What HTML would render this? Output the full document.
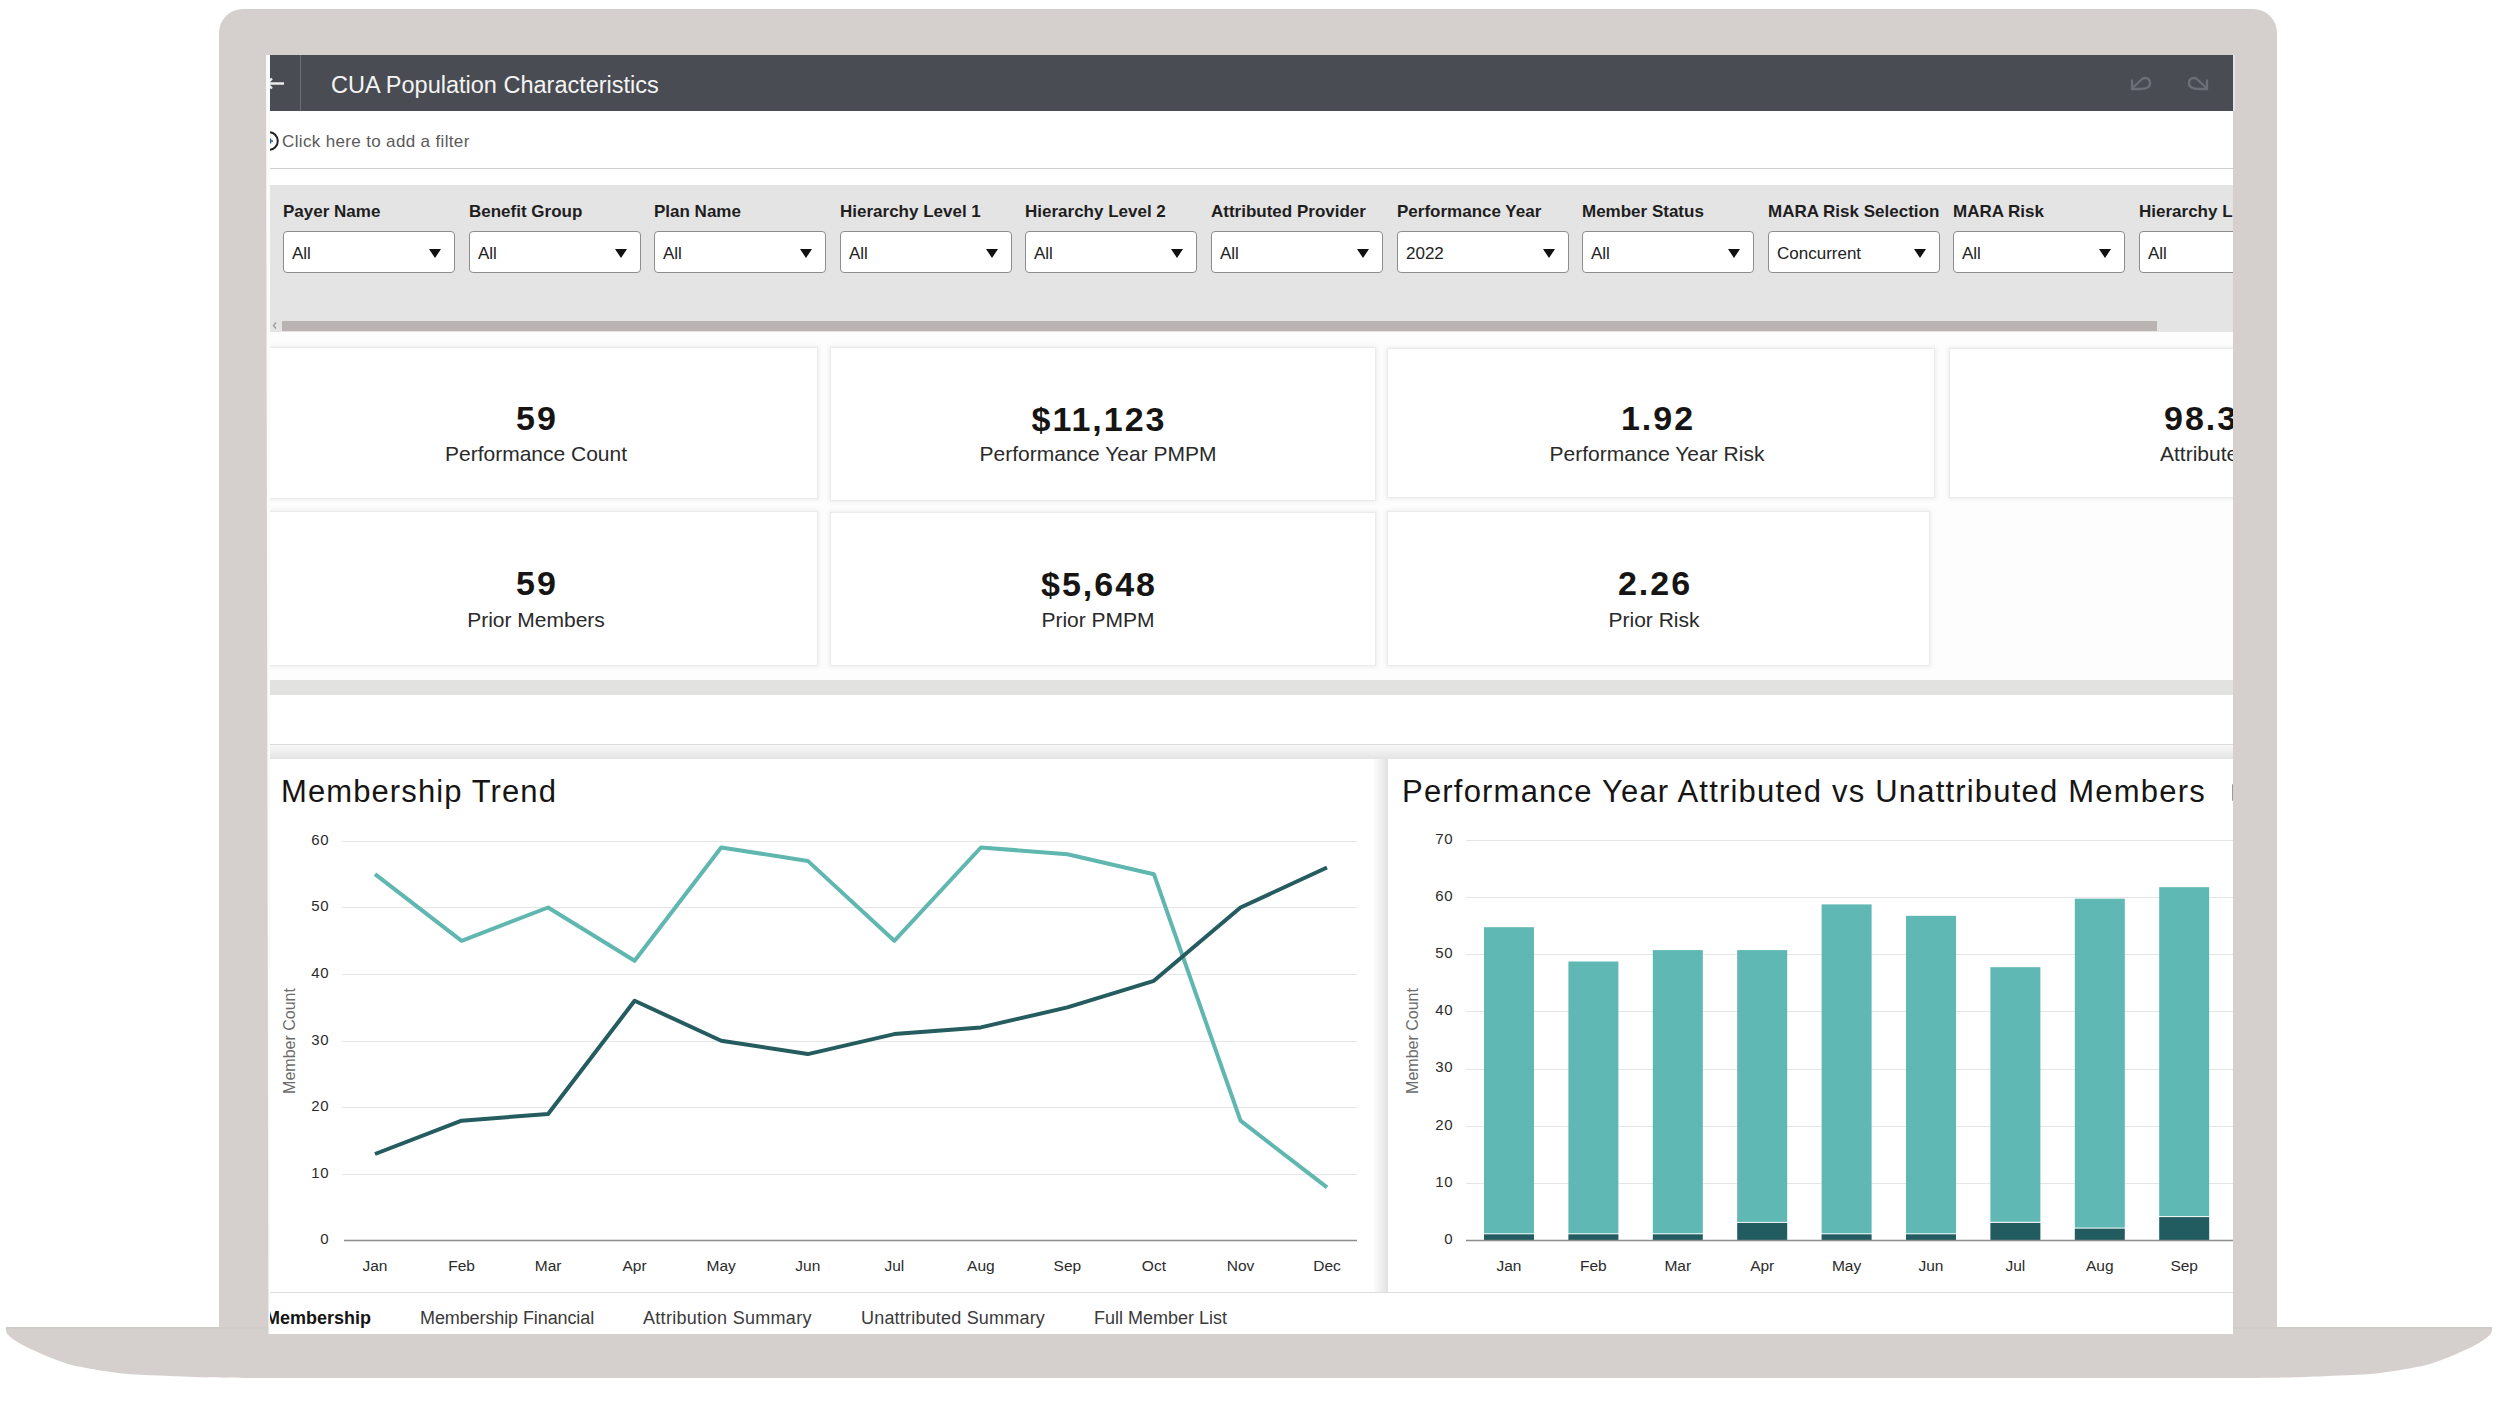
<!DOCTYPE html>
<html>
<head>
<meta charset="utf-8">
<style>
html,body{margin:0;padding:0;}
body{width:2500px;height:1424px;position:relative;overflow:hidden;background:#fff;font-family:"Liberation Sans",sans-serif;color:#161513;}
.a{position:absolute;}
.t{position:absolute;white-space:nowrap;line-height:1;}
#bezel{left:219px;top:9px;width:2058px;height:1340px;background:#d5d0cd;border-radius:24px 24px 0 0;}
#screen{left:270px;top:55px;width:1963px;height:1279px;background:#fff;overflow:hidden;}
#hdr{left:0;top:0;width:1963px;height:56px;background:#494c52;}
.lbl{font-weight:bold;font-size:17px;color:#1e1e1e;}
.dd{position:absolute;top:176px;width:170px;height:40px;border:1px solid #8d8d8d;border-radius:4px;background:#fff;}
.dd span{position:absolute;left:8px;top:13px;font-size:17px;line-height:1;color:#222;}
.dd i{position:absolute;left:145px;top:17px;width:0;height:0;border-left:6px solid transparent;border-right:6px solid transparent;border-top:9px solid #111;}
.card{position:absolute;background:#fff;}
.kv{position:absolute;left:0;width:100%;text-align:center;font-weight:bold;font-size:34px;line-height:1;color:#161513;letter-spacing:2px;text-indent:2px;}
.kl{position:absolute;left:0;width:100%;text-align:center;font-size:21px;line-height:1;color:#2a2a2a;}
.yl{font-size:15px;letter-spacing:0.5px;fill:#2b2b2b;font-family:"Liberation Sans",sans-serif;}
.xl{font-size:15.5px;fill:#2b2b2b;font-family:"Liberation Sans",sans-serif;}
.ax{font-size:16px;fill:#6b6b6b;font-family:"Liberation Sans",sans-serif;}
</style>
</head>
<body>
<!-- laptop body -->
<div id="bezel" class="a"></div>
<svg class="a" style="left:0;top:0" width="2500" height="1424">
  <path d="M5.5,1327.5 C5.9,1328.7 5.6,1332.1 8.0,1334.8 C10.4,1337.5 14.7,1340.5 20.0,1343.6 C25.3,1346.7 33.3,1350.3 40.0,1353.2 C46.7,1356.1 53.3,1358.9 60.0,1361.2 C66.7,1363.5 70.0,1364.8 80.0,1366.8 C90.0,1368.8 106.7,1371.7 120.0,1373.2 C133.3,1374.7 146.7,1374.9 160.0,1375.6 C173.3,1376.3 183.3,1376.8 200.0,1377.2 C216.7,1377.6 250.0,1377.9 260.0,1378.0 L2238,1378 C2248.0,1377.9 2281.3,1377.6 2298.0,1377.2 C2314.7,1376.8 2324.7,1376.3 2338.0,1375.6 C2351.3,1374.9 2364.7,1374.7 2378.0,1373.2 C2391.3,1371.7 2408.0,1368.8 2418.0,1366.8 C2428.0,1364.8 2431.3,1363.5 2438.0,1361.2 C2444.7,1358.9 2451.3,1356.1 2458.0,1353.2 C2464.7,1350.3 2472.7,1346.7 2478.0,1343.6 C2483.3,1340.5 2487.6,1337.5 2490.0,1334.8 C2492.4,1332.1 2492.1,1328.7 2492.5,1327.5 Z" fill="#d5d0cd"/>
  <rect x="6" y="1327" width="2486" height="2" fill="#cdccc6"/>
</svg>

<div class="a" style="left:266px;top:55px;width:5px;height:1279px;background:#fbfbfb;clip-path:polygon(0 0,100% 0,100% 100%,2.5px 100%)"></div>
<div class="a" style="left:2232px;top:55px;width:3px;height:56px;background:#e4e2e2"></div>
<div id="screen" class="a">
  <!-- header -->
  <div id="hdr" class="a">
    <div class="a" style="left:30px;top:0;width:1px;height:56px;background:#6c6f75"></div>
    <svg class="a" style="left:0;top:0" width="1963" height="56" viewBox="270 55 1963 56">
      <path d="M284,83.5 L269,83.5 M272,78.5 L267,83.5 L272,88.5" stroke="#ececec" stroke-width="2.4" fill="none"/>
      <path d="M2132.5,88 L2141.5,79.5 C2144,77 2149.5,77.5 2150,82.5 C2150.5,87 2146,89 2140,88.8 M2132,79.5 L2132,89 L2141,89" stroke="#6c6f77" stroke-width="2.3" fill="none"/>
      <path d="M2206.5,88 L2197.5,79.5 C2195,77 2189.5,77.5 2189,82.5 C2188.5,87 2193,89 2199,88.8 M2207,79.5 L2207,89 L2198,89" stroke="#6c6f77" stroke-width="2.3" fill="none"/>
    </svg>
    <div class="t" style="left:61px;top:19px;font-size:23.5px;color:#f4f4f4">CUA Population Characteristics</div>
  </div>

  <!-- filter row -->
  <svg class="a" style="left:0;top:70px" width="20" height="30" viewBox="270 125 20 30"><circle cx="269" cy="141" r="8.8" stroke="#222" stroke-width="2" fill="none"/><path d="M268,141 L273,141 M270.5,138.5 L270.5,143.5" stroke="#2a5a8a" stroke-width="1.5"/></svg>
  <div class="t" style="left:12px;top:78px;font-size:17px;color:#5a5a5a;letter-spacing:0.35px">Click here to add a filter</div>
  <div class="a" style="left:0;top:113px;width:1963px;height:1px;background:#cfcfcf"></div>

  <!-- filter bar -->
  <div class="a" id="fbar" style="left:0;top:130px;width:1963px;height:147px;background:#e4e4e4">
  </div>
  <div class="t lbl" style="left:13px;top:148px">Payer Name</div>
  <div class="dd" style="left:13px"><span>All</span><i></i></div>
  <div class="t lbl" style="left:199px;top:148px">Benefit Group</div>
  <div class="dd" style="left:199px"><span>All</span><i></i></div>
  <div class="t lbl" style="left:384px;top:148px">Plan Name</div>
  <div class="dd" style="left:384px"><span>All</span><i></i></div>
  <div class="t lbl" style="left:570px;top:148px">Hierarchy Level 1</div>
  <div class="dd" style="left:570px"><span>All</span><i></i></div>
  <div class="t lbl" style="left:755px;top:148px">Hierarchy Level 2</div>
  <div class="dd" style="left:755px"><span>All</span><i></i></div>
  <div class="t lbl" style="left:941px;top:148px">Attributed Provider</div>
  <div class="dd" style="left:941px"><span>All</span><i></i></div>
  <div class="t lbl" style="left:1127px;top:148px">Performance Year</div>
  <div class="dd" style="left:1127px"><span>2022</span><i></i></div>
  <div class="t lbl" style="left:1312px;top:148px">Member Status</div>
  <div class="dd" style="left:1312px"><span>All</span><i></i></div>
  <div class="t lbl" style="left:1498px;top:148px">MARA Risk Selection</div>
  <div class="dd" style="left:1498px"><span>Concurrent</span><i></i></div>
  <div class="t lbl" style="left:1683px;top:148px">MARA Risk</div>
  <div class="dd" style="left:1683px"><span>All</span><i></i></div>
  <div class="t lbl" style="left:1869px;top:148px">Hierarchy Level 3</div>
  <div class="dd" style="left:1869px"><span>All</span><i></i></div>
  <!-- scrollbar -->
  <div class="a" style="left:12px;top:266px;width:1875px;height:10px;background:#b9b4b2"></div>
  <svg class="a" style="left:0;top:262px" width="12" height="20" viewBox="270 317 12 20"><path d="M276,322.5 L273.5,325.5 L276,328.5" stroke="#9a9a9a" stroke-width="1.3" fill="none"/></svg>

  <!-- KPI area -->
  <div class="a" style="left:0;top:277px;width:1963px;height:348px;background:#fdfdfd"></div>
  
  <div class="card" style="left:0;top:293px;width:547px;height:150px;box-shadow:0 0 1px 1px #ebebeb, 0 0 5px 2px #efefef"></div>
  <div class="card" style="left:561px;top:293px;width:544px;height:152px;box-shadow:0 0 1px 1px #ebebeb, 0 0 5px 2px #efefef"></div>
  <div class="card" style="left:1118px;top:294px;width:546px;height:148px;box-shadow:0 0 1px 1px #ebebeb, 0 0 5px 2px #efefef"></div>
  <div class="card" style="left:1680px;top:294px;width:400px;height:148px;box-shadow:0 0 1px 1px #ebebeb, 0 0 5px 2px #efefef"></div>
  <div class="card" style="left:0;top:457px;width:547px;height:153px;box-shadow:0 0 1px 1px #ebebeb, 0 0 5px 2px #efefef"></div>
  <div class="card" style="left:561px;top:458px;width:544px;height:152px;box-shadow:0 0 1px 1px #ebebeb, 0 0 5px 2px #efefef"></div>
  <div class="card" style="left:1118px;top:457px;width:541px;height:153px;box-shadow:0 0 1px 1px #ebebeb, 0 0 5px 2px #efefef"></div>
  

  <div class="t kv" style="left:166px;width:200px;top:346px">59</div>
  <div class="t kl" style="left:116px;width:300px;top:388px">Performance Count</div>
  <div class="t kv" style="left:728px;width:200px;top:347px">$11,123</div>
  <div class="t kl" style="left:678px;width:300px;top:388px">Performance Year PMPM</div>
  <div class="t kv" style="left:1287px;width:200px;top:346px">1.92</div>
  <div class="t kl" style="left:1237px;width:300px;top:388px">Performance Year Risk</div>
  <div class="t kv" style="left:1894px;width:200px;top:346px;text-align:left;text-indent:0">98.31%</div>
  <div class="t kl" style="left:1890px;width:300px;top:388px;text-align:left">Attributed %</div>
  <div class="t kv" style="left:166px;width:200px;top:511px">59</div>
  <div class="t kl" style="left:116px;width:300px;top:554px">Prior Members</div>
  <div class="t kv" style="left:728px;width:200px;top:512px">$5,648</div>
  <div class="t kl" style="left:678px;width:300px;top:554px">Prior PMPM</div>
  <div class="t kv" style="left:1284px;width:200px;top:511px">2.26</div>
  <div class="t kl" style="left:1234px;width:300px;top:554px">Prior Risk</div>

  <div class="a" style="left:0;top:625px;width:1963px;height:15px;background:#e2e2e0"></div>
  <div class="a" style="left:0;top:640px;width:1963px;height:49px;background:#fff"></div>
  <div class="a" style="left:0;top:689px;width:1963px;height:1px;background:#dcdcdc"></div>
  <div class="a" style="left:0;top:690px;width:1963px;height:14px;background:linear-gradient(#f8f8f8,#e4e4e4)"></div>
  <!-- charts -->
  <div class="a" style="left:1104px;top:704px;width:14px;height:533px;background:linear-gradient(90deg,#fbfbfb,#e2e2e2)"></div>
  <svg class="a" style="left:0;top:0" width="1963" height="1279" viewBox="270 55 1963 1279">
<rect x="270" y="759" width="1104" height="533" fill="#fff"/>
<rect x="1388" y="759" width="845" height="533" fill="#fff"/>
<line x1="342" y1="1174.5" x2="1357" y2="1174.5" stroke="#e5e5e5" stroke-width="1"/>
<line x1="342" y1="1107.5" x2="1357" y2="1107.5" stroke="#e5e5e5" stroke-width="1"/>
<line x1="342" y1="1041.5" x2="1357" y2="1041.5" stroke="#e5e5e5" stroke-width="1"/>
<line x1="342" y1="974.5" x2="1357" y2="974.5" stroke="#e5e5e5" stroke-width="1"/>
<line x1="342" y1="907.5" x2="1357" y2="907.5" stroke="#e5e5e5" stroke-width="1"/>
<line x1="342" y1="841.5" x2="1357" y2="841.5" stroke="#e5e5e5" stroke-width="1"/>
<line x1="344" y1="1240.5" x2="1357" y2="1240.5" stroke="#8c8c8c" stroke-width="1.5"/>
<text x="329" y="1244.4" text-anchor="end" class="yl">0</text>
<text x="329" y="1177.8" text-anchor="end" class="yl">10</text>
<text x="329" y="1111.2" text-anchor="end" class="yl">20</text>
<text x="329" y="1044.5" text-anchor="end" class="yl">30</text>
<text x="329" y="977.9" text-anchor="end" class="yl">40</text>
<text x="329" y="911.3" text-anchor="end" class="yl">50</text>
<text x="329" y="844.7" text-anchor="end" class="yl">60</text>
<text x="375.0" y="1270.5" text-anchor="middle" class="xl">Jan</text>
<text x="461.6" y="1270.5" text-anchor="middle" class="xl">Feb</text>
<text x="548.1" y="1270.5" text-anchor="middle" class="xl">Mar</text>
<text x="634.6" y="1270.5" text-anchor="middle" class="xl">Apr</text>
<text x="721.2" y="1270.5" text-anchor="middle" class="xl">May</text>
<text x="807.8" y="1270.5" text-anchor="middle" class="xl">Jun</text>
<text x="894.3" y="1270.5" text-anchor="middle" class="xl">Jul</text>
<text x="980.9" y="1270.5" text-anchor="middle" class="xl">Aug</text>
<text x="1067.4" y="1270.5" text-anchor="middle" class="xl">Sep</text>
<text x="1153.9" y="1270.5" text-anchor="middle" class="xl">Oct</text>
<text x="1240.5" y="1270.5" text-anchor="middle" class="xl">Nov</text>
<text x="1327.0" y="1270.5" text-anchor="middle" class="xl">Dec</text>
<text transform="translate(294.5,1041) rotate(-90)" text-anchor="middle" class="ax">Member Count</text>
<polyline points="375.0,874.2 461.6,940.8 548.1,907.5 634.6,960.8 721.2,847.5 807.8,860.9 894.3,940.8 980.9,847.5 1067.4,854.2 1153.9,874.2 1240.5,1120.7 1327.0,1187.3" fill="none" stroke="#5fb7b0" stroke-width="4" stroke-linejoin="round"/>
<polyline points="375.0,1154.0 461.6,1120.7 548.1,1114.0 634.6,1000.8 721.2,1040.7 807.8,1054.1 894.3,1034.1 980.9,1027.4 1067.4,1007.4 1153.9,980.8 1240.5,907.5 1327.0,867.5" fill="none" stroke="#245c5f" stroke-width="4" stroke-linejoin="round"/>
<line x1="1466" y1="1183.5" x2="2233" y2="1183.5" stroke="#e5e5e5" stroke-width="1"/>
<line x1="1466" y1="1126.5" x2="2233" y2="1126.5" stroke="#e5e5e5" stroke-width="1"/>
<line x1="1466" y1="1069.5" x2="2233" y2="1069.5" stroke="#e5e5e5" stroke-width="1"/>
<line x1="1466" y1="1011.5" x2="2233" y2="1011.5" stroke="#e5e5e5" stroke-width="1"/>
<line x1="1466" y1="954.5" x2="2233" y2="954.5" stroke="#e5e5e5" stroke-width="1"/>
<line x1="1466" y1="897.5" x2="2233" y2="897.5" stroke="#e5e5e5" stroke-width="1"/>
<line x1="1466" y1="840.5" x2="2233" y2="840.5" stroke="#e5e5e5" stroke-width="1"/>
<text x="1453" y="1243.8" text-anchor="end" class="yl">0</text>
<text x="1453" y="1186.7" text-anchor="end" class="yl">10</text>
<text x="1453" y="1129.5" text-anchor="end" class="yl">20</text>
<text x="1453" y="1072.4" text-anchor="end" class="yl">30</text>
<text x="1453" y="1015.2" text-anchor="end" class="yl">40</text>
<text x="1453" y="958.1" text-anchor="end" class="yl">50</text>
<text x="1453" y="901.0" text-anchor="end" class="yl">60</text>
<text x="1453" y="843.8" text-anchor="end" class="yl">70</text>
<rect x="1484.0" y="927.2" width="50" height="306.1" fill="#5fb8b3"/>
<rect x="1484.0" y="1234.3" width="50" height="5.7" fill="#235c60"/>
<text x="1509.0" y="1270.5" text-anchor="middle" class="xl">Jan</text>
<rect x="1568.4" y="961.5" width="50" height="271.8" fill="#5fb8b3"/>
<rect x="1568.4" y="1234.3" width="50" height="5.7" fill="#235c60"/>
<text x="1593.4" y="1270.5" text-anchor="middle" class="xl">Feb</text>
<rect x="1652.8" y="950.1" width="50" height="283.2" fill="#5fb8b3"/>
<rect x="1652.8" y="1234.3" width="50" height="5.7" fill="#235c60"/>
<text x="1677.8" y="1270.5" text-anchor="middle" class="xl">Mar</text>
<rect x="1737.2" y="950.1" width="50" height="271.8" fill="#5fb8b3"/>
<rect x="1737.2" y="1222.9" width="50" height="17.1" fill="#235c60"/>
<text x="1762.2" y="1270.5" text-anchor="middle" class="xl">Apr</text>
<rect x="1821.6" y="904.4" width="50" height="328.9" fill="#5fb8b3"/>
<rect x="1821.6" y="1234.3" width="50" height="5.7" fill="#235c60"/>
<text x="1846.6" y="1270.5" text-anchor="middle" class="xl">May</text>
<rect x="1906.0" y="915.8" width="50" height="317.5" fill="#5fb8b3"/>
<rect x="1906.0" y="1234.3" width="50" height="5.7" fill="#235c60"/>
<text x="1931.0" y="1270.5" text-anchor="middle" class="xl">Jun</text>
<rect x="1990.4" y="967.2" width="50" height="254.6" fill="#5fb8b3"/>
<rect x="1990.4" y="1222.9" width="50" height="17.1" fill="#235c60"/>
<text x="2015.4" y="1270.5" text-anchor="middle" class="xl">Jul</text>
<rect x="2074.8" y="898.7" width="50" height="328.9" fill="#5fb8b3"/>
<rect x="2074.8" y="1228.6" width="50" height="11.4" fill="#235c60"/>
<text x="2099.8" y="1270.5" text-anchor="middle" class="xl">Aug</text>
<rect x="2159.2" y="887.2" width="50" height="328.9" fill="#5fb8b3"/>
<rect x="2159.2" y="1217.1" width="50" height="22.9" fill="#235c60"/>
<text x="2184.2" y="1270.5" text-anchor="middle" class="xl">Sep</text>
<line x1="1466" y1="1240.5" x2="2233" y2="1240.5" stroke="#8c8c8c" stroke-width="1.5"/>
<text transform="translate(1418,1041) rotate(-90)" text-anchor="middle" class="ax">Member Count</text>

  </svg>
  <div class="t" style="left:11px;top:721px;font-size:31px;color:#161513;letter-spacing:1.1px">Membership Trend</div>
  <div class="t" style="left:1132px;top:721px;font-size:31px;color:#161513;letter-spacing:1.2px">Performance Year Attributed vs Unattributed Members</div>
  <div class="a" style="left:1962px;top:729px;width:2px;height:17px;background:#9a9a9a;border-radius:2px"></div>
  <div class="a" style="left:0;top:1237px;width:1963px;height:1px;background:#dedede"></div>
  <div class="t" style="left:-5px;top:1254px;font-size:18px;font-weight:bold;color:#161513">Membership</div>
  <div class="t" style="left:150px;top:1254px;font-size:18px;color:#3a3a3a;letter-spacing:-0.1px">Membership Financial</div>
  <div class="t" style="left:373px;top:1254px;font-size:18px;color:#3a3a3a;letter-spacing:0.3px">Attribution Summary</div>
  <div class="t" style="left:591px;top:1254px;font-size:18px;color:#3a3a3a;letter-spacing:0.2px">Unattributed Summary</div>
  <div class="t" style="left:824px;top:1254px;font-size:18px;color:#3a3a3a">Full Member List</div>
</div>

</body>
</html>
